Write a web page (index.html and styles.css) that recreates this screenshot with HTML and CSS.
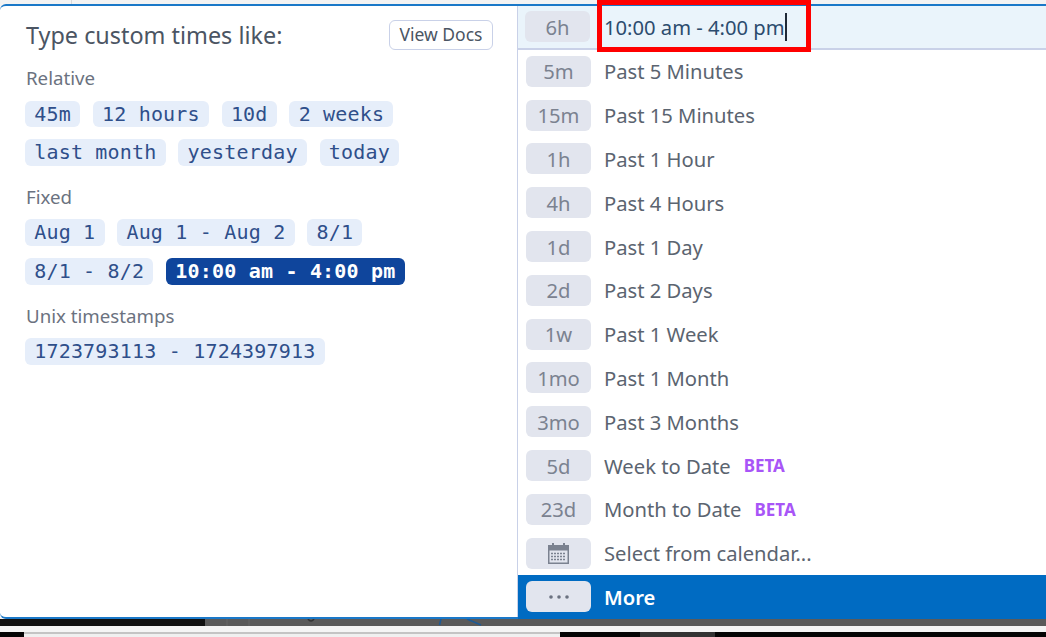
FILE: index.html
```html
<!DOCTYPE html>
<html lang="en">
<head>
    <meta name="viewport" content="width=device-width, initial-scale=1">
    <title>Time picker</title>
    <link rel="stylesheet" href="styles.css">
</head>
<body>
    <div class="top-strip"><div class="top-cell"></div></div>

    <div class="panel">
        <div class="help">
            <div class="help-head">
                <h1>Type custom times like:</h1>
                <button class="docs-btn">View Docs</button>
            </div>

            <h2>Relative</h2>
            <div class="chips">
                <span class="chip">45m</span>
                <span class="chip">12 hours</span>
                <span class="chip">10d</span>
                <span class="chip">2 weeks</span>
                <span class="chip">last month</span>
                <span class="chip">yesterday</span>
                <span class="chip">today</span>
            </div>

            <h2>Fixed</h2>
            <div class="chips">
                <span class="chip">Aug 1</span>
                <span class="chip">Aug 1 - Aug 2</span>
                <span class="chip">8/1</span>
                <span class="chip">8/1 - 8/2</span>
                <span class="chip active">10:00 am - 4:00 pm</span>
            </div>

            <h2>Unix timestamps</h2>
            <div class="chips">
                <span class="chip">1723793113 - 1724397913</span>
            </div>
        </div>

        <ul class="options">
            <li class="option input-row">
                <span class="badge">6h</span>
                <span class="typed">10:00 am - 4:00 pm<span class="caret"></span></span>
            </li>
            <li class="option"><span class="badge">5m</span>Past 5 Minutes</li>
            <li class="option"><span class="badge">15m</span>Past 15 Minutes</li>
            <li class="option"><span class="badge">1h</span>Past 1 Hour</li>
            <li class="option"><span class="badge">4h</span>Past 4 Hours</li>
            <li class="option"><span class="badge">1d</span>Past 1 Day</li>
            <li class="option"><span class="badge">2d</span>Past 2 Days</li>
            <li class="option"><span class="badge">1w</span>Past 1 Week</li>
            <li class="option"><span class="badge">1mo</span>Past 1 Month</li>
            <li class="option"><span class="badge">3mo</span>Past 3 Months</li>
            <li class="option"><span class="badge">5d</span>Week to Date<span class="beta">BETA</span></li>
            <li class="option"><span class="badge">23d</span>Month to Date<span class="beta">BETA</span></li>
            <li class="option">
                <span class="badge">
                    <svg viewBox="0 0 21 21" width="21" height="21">
                        <rect x="4" y="0" width="2" height="5" fill="#7b8290"/>
                        <rect x="15" y="0" width="2" height="5" fill="#7b8290"/>
                        <rect x="0.75" y="2.75" width="19.5" height="17.5" fill="none" stroke="#7b8290" stroke-width="1.5"/>
                        <rect x="1" y="3" width="19" height="4.5" fill="#7b8290"/>
                        <path d="M3 10.5h15M3 13.5h15M3 16.5h15" stroke="#7b8290" stroke-width="1.6" stroke-dasharray="2 1"/>
                    </svg>
                </span>
                Select from calendar...
            </li>
            <li class="option more">
                <span class="badge">
                    <svg viewBox="0 0 20 4" width="20" height="4">
                        <circle cx="2" cy="2" r="1.8" fill="#6b7280"/>
                        <circle cx="10" cy="2" r="1.8" fill="#6b7280"/>
                        <circle cx="18" cy="2" r="1.8" fill="#6b7280"/>
                    </svg>
                </span>
                More
            </li>
        </ul>

        <div class="highlight"></div>
    </div>

    <div class="dark-strip">
        <div class="dark-black"></div>
        <div class="dark-grey">
            <svg class="behind" viewBox="0 0 841 7" width="841" height="7">
                <path d="M22 0v7M44 0v7" stroke="#666" stroke-width="1"/>
                <path d="M103 0q3 4 6 0" fill="none" stroke="#333" stroke-width="1.5"/>
                <path d="M236 0l-1.5 6" stroke="#1c5a96" stroke-width="1.5"/>
                <path d="M262 0l14 6" stroke="#1c5a96" stroke-width="1.5"/>
            </svg>
        </div>
    </div>
    <div class="light-strip"></div>
    <div class="taskbar">
        <div class="tb-black tb-a"></div>
        <div class="tb-light"></div>
        <div class="tb-black tb-b"></div>
        <div class="tb-grey"></div>
        <div class="tb-black tb-c"></div>
    </div>
</body>
</html>
```

FILE: styles.css
```css
* {
    box-sizing: border-box;
}
body {
    margin: 0;
    height: 637px;
    overflow: hidden;
    background-color: #f4f4f4;
    font-family: "Noto Sans", sans-serif;
}
.top-strip {
    height: 4px;
    background-color: #f3f3f3;
}
.top-cell {
    width: 72px;
    height: 4px;
    border-right: 1px solid #d8d8d8;
}
.panel {
    position: relative;
    display: flex;
    height: 615px;
    background: white;
    border-top: 2px solid #1a78c8;
    border-bottom: 2px solid #1a78c8;
    border-radius: 6px 0 0 6px;
}
.help {
    width: 518px;
    padding: 14px 24px 0 25px;
    border-right: 1.5px solid #c9d1e8;
}
.help-head {
    display: flex;
    justify-content: space-between;
    align-items: center;
    height: 30px;
    margin-bottom: 16px;
}
h1 {
    margin: 0;
    padding-left: 1px;
    font-size: 23.4px;
    font-weight: 400;
    color: #4b5563;
}
h2 {
    margin: 0 0 10.5px 0;
    padding-left: 1px;
    font-size: 18.7px;
    line-height: 24px;
    font-weight: 400;
    color: #6b7280;
}
.docs-btn {
    width: 104px;
    height: 30px;
    padding: 0 0 2px 0;
    background: white;
    border: 1.5px solid #c9d1e8;
    border-radius: 6px;
    font-family: "Noto Sans", sans-serif;
    font-size: 17.5px;
    color: #4b5563;
}
.chips {
    display: flex;
    flex-wrap: wrap;
    gap: 12.6px 12.7px;
    margin-bottom: 19px;
}
.chip {
    height: 26.4px;
    padding: 0 9.2px;
    border-radius: 6px;
    background-color: #e6eefa;
    color: #2f4f8a;
    font-family: "DejaVu Sans Mono", monospace;
    font-size: 20px;
    letter-spacing: 0.19px;
    line-height: 26.4px;
    white-space: pre;
}
.chip.active {
    background-color: #0f459c;
    color: white;
    font-weight: bold;
}
.options {
    flex: 1;
    margin: 0;
    padding: 0;
    list-style: none;
}
.option {
    display: flex;
    align-items: center;
    height: 43.8px;
    padding-left: 8px;
    font-size: 20.2px;
    color: #5b6470;
}
.badge {
    display: flex;
    align-items: center;
    justify-content: center;
    flex-shrink: 0;
    width: 65px;
    height: 31px;
    margin-right: 13px;
    border-radius: 6px;
    background-color: #e2e5ee;
    color: #7b8290;
}
.input-row {
    height: 43.5px;
    padding-left: 7px;
    background-color: #eaf4fb;
    border-bottom: 2px solid #c9d1e8;
}
.input-row .badge {
    margin-right: 14px;
}
.typed {
    display: flex;
    align-items: center;
    color: #2c4c6e;
}
.caret {
    width: 2px;
    height: 28px;
    background-color: #1f2937;
}
.beta {
    margin-left: 13px;
    font-size: 17px;
    font-weight: 700;
    color: #a855f7;
}
.more {
    background-color: #006bc2;
    color: white;
    font-weight: 600;
}
.highlight {
    position: absolute;
    left: 597px;
    top: -6px;
    width: 214px;
    height: 52px;
    border: 5px solid #ff0000;
}
.dark-strip {
    display: flex;
    height: 7px;
}
.dark-black {
    width: 205px;
    background-color: #111;
}
.dark-grey {
    flex: 1;
    background-color: #5a5a5a;
}
.behind {
    display: block;
}
.light-strip {
    height: 6px;
    background-color: #f5f5f5;
}
.taskbar {
    display: flex;
    height: 5px;
}
.tb-black {
    background-color: #050505;
}
.tb-a {
    width: 24px;
}
.tb-light {
    width: 536px;
    background-color: #f0f0f0;
    border-top: 2px solid #c4c4c4;
}
.tb-b {
    width: 80px;
}
.tb-grey {
    width: 75px;
    background-color: #333;
}
.tb-c {
    flex: 1;
}
```
